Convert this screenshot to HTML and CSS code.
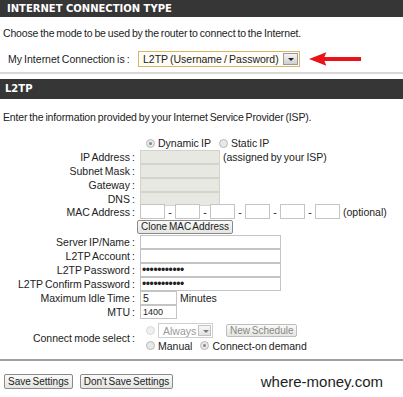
FILE: index.html
```html
<!DOCTYPE html>
<html lang="en">
<head>
  <meta charset="UTF-8">
  <title>L2TP Setup</title>
  <link rel="stylesheet" href="styles.css">
</head>
<body>
  <section class="box">
    <h2 class="bar">INTERNET CONNECTION TYPE</h2>
    <p class="intro">Choose the mode to be used by the router to connect to the Internet.</p>
    <div class="conn">
      <span class="conn-label">My Internet Connection is :</span>
      <span class="select main">
        <span class="select-text">L2TP (Username / Password)</span>
        <span class="drop"></span>
      </span>
      <svg class="arrow" viewBox="0 0 56 14" aria-hidden="true">
        <path d="M0 7 L18 0 L16 5 L54 5 L54 9 L16 9 L18 14 Z" fill="#e8131b"/>
      </svg>
    </div>
  </section>

  <section class="box second">
    <h2 class="bar tall">L2TP</h2>
    <p class="intro low">Enter the information provided by your Internet Service Provider (ISP).</p>

    <div class="row radios">
      <span></span>
      <div class="field">
        <span class="radio on"></span><span class="rtext">Dynamic IP</span>
        <span class="radio"></span><span class="rtext">Static IP</span>
      </div>
    </div>

    <div class="row"><label>IP Address :</label><div class="field"><span class="in grey"></span><span class="note">(assigned by your ISP)</span></div></div>
    <div class="row"><label>Subnet Mask :</label><div class="field"><span class="in grey"></span></div></div>
    <div class="row"><label>Gateway :</label><div class="field"><span class="in grey"></span></div></div>
    <div class="row"><label>DNS :</label><div class="field"><span class="in grey"></span></div></div>

    <div class="row mac"><label>MAC Address :</label>
      <div class="field">
        <span class="in small"></span><span class="dash">-</span>
        <span class="in small"></span><span class="dash">-</span>
        <span class="in small"></span><span class="dash">-</span>
        <span class="in small"></span><span class="dash">-</span>
        <span class="in small"></span><span class="dash">-</span>
        <span class="in small"></span><span class="opt">(optional)</span>
      </div>
    </div>
    <div class="row clone"><span></span><div class="field"><button class="btn">Clone MAC Address</button></div></div>

    <div class="row"><label>Server IP/Name :</label><div class="field"><span class="in wide"></span></div></div>
    <div class="row"><label>L2TP Account :</label><div class="field"><span class="in wide"></span></div></div>
    <div class="row"><label>L2TP Password :</label><div class="field"><span class="in wide dots">&bull;&bull;&bull;&bull;&bull;&bull;&bull;&bull;&bull;&bull;&bull;</span></div></div>
    <div class="row"><label>L2TP Confirm Password :</label><div class="field"><span class="in wide dots">&bull;&bull;&bull;&bull;&bull;&bull;&bull;&bull;&bull;&bull;&bull;</span></div></div>
    <div class="row"><label>Maximum Idle Time :</label><div class="field"><span class="in short">5</span><span class="unit">Minutes</span></div></div>
    <div class="row"><label>MTU :</label><div class="field"><span class="in short mtu">1400</span></div></div>

    <div class="row mode"><label>Connect mode select :</label>
      <div class="mode-lines">
        <div class="field">
          <span class="radio off"></span>
          <span class="select always"><span class="select-text">Always</span><span class="drop"></span></span>
          <button class="btn dim">New Schedule</button>
        </div>
        <div class="field">
          <span class="radio"></span><span class="rtext">Manual</span>
          <span class="radio on"></span><span class="rtext">Connect-on demand</span>
        </div>
      </div>
    </div>
  </section>

  <footer class="actions">
    <button class="btn">Save Settings</button>
    <button class="btn">Don't Save Settings</button>
    <span class="site">where-money.com</span>
  </footer>
</body>
</html>
```

FILE: styles.css
```css
*{box-sizing:border-box;margin:0;padding:0}
body{
  width:403px;height:397px;background:#fff;color:#222;
  font-family:'Liberation Sans',Arial,sans-serif;font-size:10.5px;line-height:14px;word-spacing:-.8px;
  overflow:hidden;white-space:nowrap;
}
.bar{
  height:17px;padding-left:7px;background:#363636;color:#fff;word-spacing:0;
  font-family:'DejaVu Sans',sans-serif;font-size:10px;font-weight:bold;line-height:17px;
}
.bar.tall{height:20px;line-height:20px;padding-left:5px}
.intro{padding-left:3px;margin-top:9px;letter-spacing:-.15px}
.intro.low{margin-top:11px}

/* connection type */
.conn{display:flex;align-items:center;height:16px;margin-top:11px;padding-left:8px}
.conn-label{width:130px}
.select{
  display:inline-flex;align-items:center;justify-content:space-between;
  height:16px;border:1px solid #d9b56b;background:#fffdf6;padding-left:4px;
}
.select.main{width:162px}
.drop{
  width:15px;height:12px;margin-right:1px;border:1px solid #9a9a9a;
  background:linear-gradient(#f4f4f4,#cfcfcf);position:relative;
}
.drop:after{
  content:"";position:absolute;left:4px;top:4px;
  border-left:3px solid transparent;border-right:3px solid transparent;border-top:3px solid #222;
}
.arrow{width:54px;height:14px;margin-left:9px}

.second{border-top:2px solid #d8d8d8;margin-top:5px;padding-top:5px}

/* form rows */
.row{display:grid;grid-template-columns:135px 1fr;column-gap:5px;height:14px;align-items:center}
.row label{text-align:right}
.field{display:flex;align-items:center;height:100%}
.radios{margin-top:12px;height:14px}
.radios .field{padding-left:6px}
.radio{
  width:9px;height:9px;border-radius:50%;border:1px solid #b8b8b8;background:#e8e8e8;position:relative;flex:none;
}
.radio.on:after{content:"";position:absolute;left:2px;top:2px;width:3px;height:3px;border-radius:50%;background:#888}
.radio.off{border-color:#d8d8d8;background:#f0f0f0}
.rtext{margin:0 8px 0 3px}

.in{display:block;height:14px;border:1px solid #c4c4c4;background:#fff;flex:none}
.grey{width:80px;background:#e8e8e2;border-color:#d4d4cc}
.note{margin-left:3px}
.mac{height:15px;margin-top:-2px}
.small{width:25px;height:15px}
.dash{width:10px;text-align:center}
.opt{margin-left:3px}
.clone{height:16px}
.btn{
  font-family:'Liberation Sans',Arial,sans-serif;font-size:10px;color:#222;line-height:12px;word-spacing:-1px;
  padding:0 3px;height:14px;border:1px solid #8a8a8a;border-radius:2px;background:linear-gradient(#fafafa,#e4e4e0);
  white-space:nowrap;
}
.clone .btn{margin-left:-3px}
.wide{width:141px}
.dots{font-size:12px;line-height:12px;padding-left:1px;letter-spacing:-.4px}
.short{width:37px;padding-left:2px;line-height:12px}
.mtu{font-size:9px}
.unit{margin-left:3px}

.mode{height:30px;margin-top:4px}
.mode-lines{display:flex;flex-direction:column}
.mode-lines .field{height:15px;padding-left:6px}
.always{width:55px;height:15px;margin-left:3px;color:#999;border-color:#cfcfcf;background:#fff}
.always .drop{width:13px;height:11px;opacity:.6}
.btn.dim{margin-left:13px;color:#888;border-color:#bdbdbd;height:13px}

.actions{
  border-top:2px solid #a0a0a0;margin-top:6px;padding:13px 0 0 4px;
  display:flex;align-items:center;gap:7px;
}
.actions .btn{height:15px}
.site{margin-left:auto;margin-right:20px;font-size:15px;word-spacing:0;color:#1e1e1e}
```
